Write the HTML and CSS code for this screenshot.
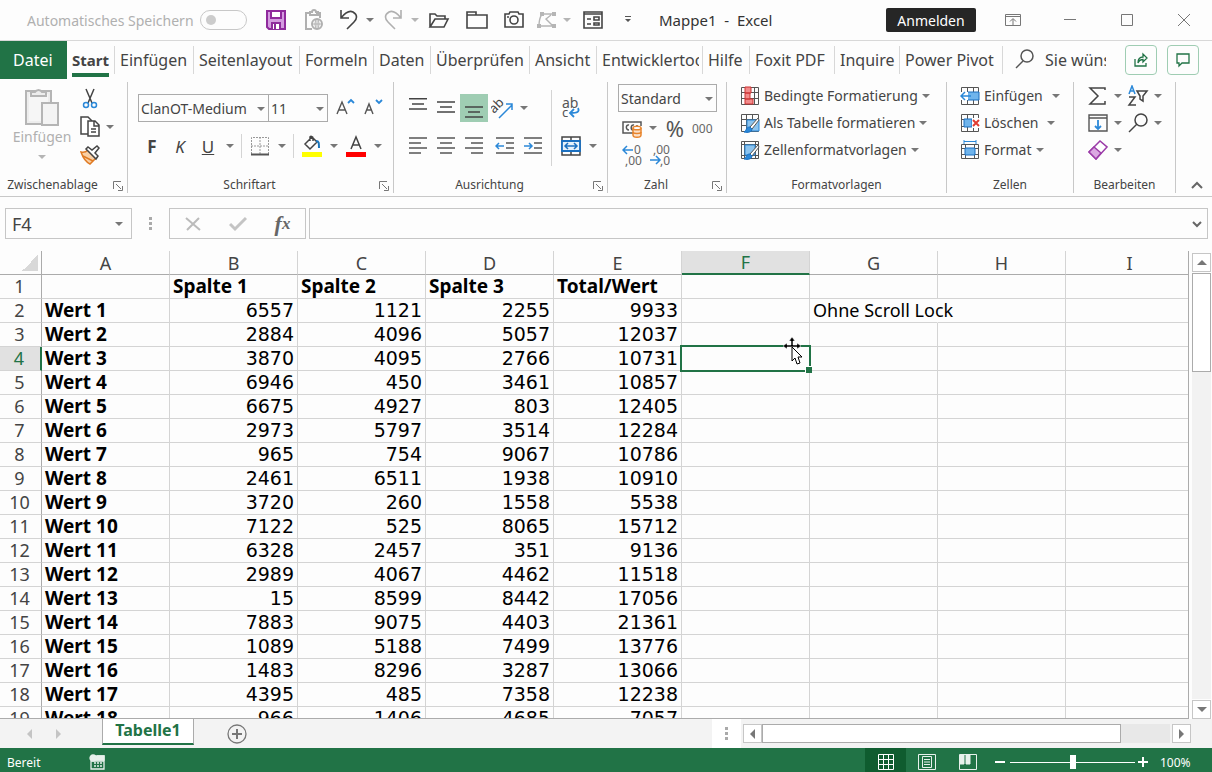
FILE: index.html
```html
<!DOCTYPE html>
<html lang="de">

<head>
    <meta charset="UTF-8">
    <meta name="viewport" content="width=device-width, initial-scale=1.0">
    <title>Mappe1 - Excel</title>
    <link rel="stylesheet" href="styles.css">
</head>

<body>
    <header class="titlebar">
        <label class="autosave" for="autosave">Automatisches Speichern</label>
        <input type="checkbox" id="autosave" class="toggle" disabled>
        <div class="quick">
            <button aria-label="Speichern"><svg width="22" height="22" viewBox="0 0 22 22" fill="none" stroke="#8f2a9c" stroke-width="2"><path d="M2 2h18v18H4l-2-2z" fill="#d49be0"/><path d="M6 2h10v7H6z" fill="#fff"/><path d="M7 20v-6h8v6" fill="#fff"/><path d="M10 15v5"/></svg></button>
            <button aria-label="Einfügen" disabled><svg width="20" height="22" viewBox="0 0 20 22" fill="none" stroke="#b0b0b0" stroke-width="2"><path d="M8 20H2V4h4M12 4h4v5M6 6V3h2a2 2 0 0 1 4 0h2v3z"/><circle cx="13" cy="15" r="5"/><path d="M13 10v10M8 15h10" stroke-width="1"/><ellipse cx="13" cy="15" rx="2" ry="5" stroke-width="1"/></svg></button>
            <button aria-label="Rückgängig"><svg width="20" height="22" viewBox="0 0 20 22" fill="none" stroke="#444" stroke-width="1.6"><path d="M2 1v8h8M2 9C6 4 10 1 14 3c5 3 4 7 1 10l-7 7"/></svg></button>
            <button aria-label="Liste" class="caret"></button>
            <button aria-label="Wiederholen" disabled><svg width="20" height="22" viewBox="0 0 20 22" fill="none" stroke="#b0b0b0" stroke-width="1.6"><path d="M18 1v8h-8M18 9C14 4 10 1 6 3c-5 3-4 7-1 10l7 7"/></svg></button>
            <button aria-label="Liste" class="caret" disabled></button>
            <button aria-label="Öffnen"><svg width="22" height="20" viewBox="0 0 22 20" fill="none" stroke="#444" stroke-width="1.6"><path d="M2 17V4h5l2 2h8v3M2 17l5-8h13l-4 8z"/></svg></button>
            <button aria-label="Neu"><svg width="22" height="20" viewBox="0 0 22 20" fill="none" stroke="#444" stroke-width="1.6"><path d="M1 2h9v3h11v13H1zM1 5h9"/></svg></button>
            <button aria-label="Kamera"><svg width="22" height="20" viewBox="0 0 22 20" fill="none" stroke="#444" stroke-width="1.6"><path d="M2 4h4l1-2h8l1 2h4v13H2z"/><circle cx="11" cy="10" r="4"/><path d="M4 7h2"/></svg></button>
            <button aria-label="Form" disabled><svg width="22" height="20" viewBox="0 0 22 20" fill="none" stroke="#b5b5b5" stroke-width="1.4"><path d="M6 4c-2 3-3 7-3 12h15M8 4h10M15 5l-5 4 6 6"/><path d="M4 2h4v4H4zM16 2h4v4h-4zM1 14h4v4H1zM16 14h4v4h-4z" fill="#b5b5b5" stroke="none"/></svg></button>
            <button aria-label="Liste" class="caret" disabled></button>
            <button aria-label="Formular"><svg width="22" height="20" viewBox="0 0 22 20" fill="none" stroke="#444" stroke-width="1.6"><path d="M2 2h18v16H2zM2 4h18"/><path d="M5 9h4M5 14h4M12 7h5v3h-5zM12 13h5v2h-5z"/></svg></button>
            <button aria-label="Anpassen"><svg width="8" height="8" viewBox="0 0 8 8" fill="#555"><path d="M1 0h6v1H1zM1 3h6L4 6z"/></svg></button>
        </div>
        <h1 class="doc-title">Mappe1&nbsp; -&nbsp; Excel</h1>
        <button class="signin">Anmelden</button>
        <div class="window-buttons">
            <button aria-label="Menüband"><svg width="16" height="14" viewBox="0 0 16 14" fill="none" stroke="#777"><path d="M.5 1.500h15v11H.5zM.5 3.500h15M8 12V6M5 8.500L8 5.500l3 3"/></svg></button>
            <button aria-label="Minimieren"><svg width="14" height="14" viewBox="0 0 14 14" stroke="#777"><path d="M1 6.500h12"/></svg></button>
            <button aria-label="Maximieren"><svg width="14" height="14" viewBox="0 0 14 14" fill="none" stroke="#777"><path d="M1.500 1.500h11v11h-11z"/></svg></button>
            <button aria-label="Schließen"><svg width="14" height="14" viewBox="0 0 14 14" stroke="#777"><path d="M1 1l12 12M13 1L1 13"/></svg></button>
        </div>
    </header>

    <nav class="tabs">
        <a href="#" class="file">Datei</a>
        <a href="#" class="active"><span>Start</span></a>
        <a href="#">Einfügen</a>
        <a href="#">Seitenlayout</a>
        <a href="#">Formeln</a>
        <a href="#">Daten</a>
        <a href="#">Überprüfen</a>
        <a href="#">Ansicht</a>
        <a href="#"><span class="clip">Entwicklertools</span></a>
        <a href="#">Hilfe</a>
        <a href="#">Foxit PDF</a>
        <a href="#">Inquire</a>
        <a href="#">Power Pivot</a>
        <div class="tell-me">
            <svg width="20" height="20" viewBox="0 0 20 20" fill="none" stroke="#555" stroke-width="1.500"><circle cx="12" cy="7" r="6"/><path d="M8 12l-7 7"/></svg>
            <a href="#" class="clip">Sie wünschen</a>
        </div>
        <div class="share">
            <button aria-label="Freigeben"><svg width="16" height="16" viewBox="0 0 16 16" fill="none" stroke="#217346" stroke-width="1.300"><path d="M2 7v7h11v-3M5 11c0-4 2-6 5-6V2l4 4-4 4V7.500C8 7.500 6 8.500 5 11z"/></svg></button>
            <button aria-label="Kommentare"><svg width="16" height="16" viewBox="0 0 16 16" fill="none" stroke="#217346" stroke-width="1.300"><path d="M2 2h12v9H7l-3 3v-3H2z"/></svg></button>
        </div>
    </nav>

    <section class="ribbon">
        <div class="group clipboard">
            <div class="group-body">
                <button class="paste" disabled>
                    <svg width="36" height="40" viewBox="0 0 36 40" fill="#ededed" stroke="#b5b5b5" stroke-width="2"><path d="M2 5h25v33H2z"/><path d="M5 8h19v27H5z" fill="#f6f6f6" stroke="none"/><path d="M7 10V6h4a4 4 0 0 1 7 0h4v4z"/><path d="M18 17h16v22H18z" fill="#f4f4f4"/></svg>
                    <span>Einfügen</span>
                    <i class="arrow"></i>
                </button>
                <div class="stack">
                    <div class="row"><button aria-label="Ausschneiden"><svg width="20" height="22" viewBox="0 0 20 22" fill="none" stroke="#444" stroke-width="1.500"><path d="M6 1l6 14M14 1L8 15"/><g stroke="#2b88d8"><circle cx="6" cy="17" r="2.500"/><circle cx="14" cy="17" r="2.500"/></g></svg></button></div>
                    <div class="row"><button aria-label="Kopieren"><svg width="20" height="22" viewBox="0 0 20 22" fill="#fff" stroke="#444" stroke-width="1.500"><path d="M8 18H1V1h7l4 4"/><path d="M8 5h7l4 4v11H8zM14 5v5h5M11 13h5M11 16h5"/></svg></button><button aria-label="Liste" class="caret"></button></div>
                    <div class="row"><button aria-label="Format übertragen"><svg width="20" height="22" viewBox="0 0 20 22" fill="#fff" stroke="#444" stroke-width="1.500"><path d="M1 8c3 1 5 0 7-2l8 8-6 6C6 18 3 14 1 8z" fill="#f9cfa4" stroke="#e07b24"/><path d="M3 12l10 5" stroke="#e07b24"/><path d="M6 5l10 10 2-3-3-3 4-5-2-2-5 4-4-3z"/></svg></button></div>
                </div>
            </div>
            <div class="group-name">Zwischenablage<button aria-label="Mehr" class="launch"><svg width="10" height="10" viewBox="0 0 10 10" fill="none" stroke="#777"><path d="M.5 8V.5H8M3 3l5 5M9.500 5v4.500H5"/></svg></button></div>
        </div>

        <div class="group font">
            <div class="group-body rows">
                <div class="row">
                    <span class="combo font-name"><select aria-label="Schriftart"><option>ClanOT-Medium</option></select></span>
                    <span class="combo font-size"><select aria-label="Schriftgrad"><option>11</option></select></span>
                    <button aria-label="Größer"><svg width="20" height="20" viewBox="0 0 20 20" fill="none" stroke="#555" stroke-width="1.400"><path d="M2 16L7 4l5 12M4 12h6"/><path d="M13 5l3-3 3 3" stroke="#2b88d8" stroke-width="1.800"/></svg></button>
                    <button aria-label="Kleiner"><svg width="20" height="20" viewBox="0 0 20 20" fill="none" stroke="#555" stroke-width="1.400"><path d="M2 16L6 6l4 10M4 12h5"/><path d="M13 2l3 3 3-3" stroke="#2b88d8" stroke-width="1.800"/></svg></button>
                </div>
                <div class="row">
                    <button class="bold">F</button>
                    <button class="italic">K</button>
                    <button class="underline">U</button>
                    <button aria-label="Liste" class="caret"></button>
                    <i class="divider"></i>
                    <button aria-label="Rahmen"><svg width="20" height="20" viewBox="0 0 20 20" fill="none" stroke="#999"><path d="M1.500 18V1.500h17V18M10 1v17M1 10h18" stroke-dasharray="2 1"/><path d="M1 18.500h18" stroke="#555" stroke-width="2"/></svg></button>
                    <button aria-label="Liste" class="caret"></button>
                    <i class="divider"></i>
                    <button aria-label="Füllfarbe"><svg width="20" height="22" viewBox="0 0 20 22" fill="none" stroke="#444" stroke-width="1.500"><path d="M3 9l7-7 5 5-7 7zM8 6V2c0-1 3-1 3 1v3"/><path d="M14 6c3 0 3 2 3 7" stroke="#1a75bc" stroke-width="2"/><path d="M0 17h20v5H0z" fill="#ff0" stroke="none"/></svg></button>
                    <button aria-label="Liste" class="caret"></button>
                    <button aria-label="Schriftfarbe"><svg width="20" height="22" viewBox="0 0 20 22" fill="none" stroke="#444" stroke-width="1.500"><path d="M5 14l5-12 5 12M7 10h6"/><path d="M0 17h20v5H0z" fill="#f00" stroke="none"/></svg></button>
                    <button aria-label="Liste" class="caret"></button>
                </div>
            </div>
            <div class="group-name">Schriftart<button aria-label="Mehr" class="launch"><svg width="10" height="10" viewBox="0 0 10 10" fill="none" stroke="#777"><path d="M.5 8V.5H8M3 3l5 5M9.500 5v4.500H5"/></svg></button></div>
        </div>

        <div class="group align">
            <div class="group-body">
                <div class="rows">
                    <div class="row">
                        <button aria-label="Oben"><svg width="20" height="20" viewBox="0 0 20 20" stroke="#444" stroke-width="1.500"><path d="M1 0.800h18M4 6h12M1 11h18"/></svg></button>
                        <button aria-label="Mitte"><svg width="20" height="20" viewBox="0 0 20 20" stroke="#444" stroke-width="1.500"><path d="M1 4h18M4 9h12M1 14h18"/></svg></button>
                        <button aria-label="Unten" class="on"><svg width="20" height="20" viewBox="0 0 20 20" stroke="#444" stroke-width="1.500"><path d="M1 9h18M4 14h12M1 19h18"/></svg></button>
                        <button aria-label="Ausrichtung"><svg width="22" height="22" viewBox="0 0 22 22" fill="none"><text x="0" y="14" transform="rotate(-45 5 12)" font-size="13" fill="#444">ab</text><path d="M8 21L21 8M15 7h6v6" stroke="#2b88d8" stroke-width="1.500"/></svg></button>
                        <button aria-label="Liste" class="caret"></button>
                    </div>
                    <div class="row">
                        <button aria-label="Linksbündig"><svg width="20" height="20" viewBox="0 0 20 20" stroke="#555" stroke-width="1.500"><path d="M1 2h18M1 7h12M1 12h18M1 17h12"/></svg></button>
                        <button aria-label="Zentriert"><svg width="20" height="20" viewBox="0 0 20 20" stroke="#555" stroke-width="1.500"><path d="M1 2h18M4 7h12M1 12h18M4 17h12"/></svg></button>
                        <button aria-label="Rechtsbündig"><svg width="20" height="20" viewBox="0 0 20 20" stroke="#555" stroke-width="1.500"><path d="M1 2h18M7 7h12M1 12h18M7 17h12"/></svg></button>
                        <button aria-label="Einzug verkleinern" class="indent"><svg width="20" height="20" viewBox="0 0 20 20" fill="none" stroke="#555" stroke-width="1.500"><path d="M1 2h18M11 7h8M11 12h8M1 17h18"/><path d="M9 10H1M4 7l-3 3 3 3" stroke="#2b88d8"/></svg></button>
                        <button aria-label="Einzug vergrößern"><svg width="20" height="20" viewBox="0 0 20 20" fill="none" stroke="#555" stroke-width="1.500"><path d="M1 2h18M11 7h8M11 12h8M1 17h18"/><path d="M1 10h8M6 7l3 3-3 3" stroke="#2b88d8"/></svg></button>
                    </div>
                </div>
                <i class="divider tall"></i>
                <div class="rows">
                    <div class="row"><button aria-label="Textumbruch"><svg width="20" height="22" viewBox="0 0 20 22" fill="none"><text x="1" y="11" font-size="14" fill="#555">ab</text><text x="1" y="20" font-size="13" fill="#555">c</text><path d="M17 11c2 4-1 5-7 5M13 12l-4 4 4 4" stroke="#2b88d8" stroke-width="1.800"/></svg></button></div>
                    <div class="row"><button aria-label="Verbinden"><svg width="20" height="20" viewBox="0 0 20 20" fill="none" stroke="#444" stroke-width="1.500"><path d="M1 1h18v18H1zM10 1v4M10 15v4"/><path d="M1 5h18v10H1z" fill="#e6f1fa" stroke="#1a6fc0" stroke-width="1.800"/><path d="M4 10h12M7 7l-3 3 3 3M13 7l3 3-3 3" stroke="#1a6fc0"/></svg></button><button aria-label="Liste" class="caret"></button></div>
                </div>
            </div>
            <div class="group-name">Ausrichtung<button aria-label="Mehr" class="launch"><svg width="10" height="10" viewBox="0 0 10 10" fill="none" stroke="#777"><path d="M.5 8V.5H8M3 3l5 5M9.500 5v4.500H5"/></svg></button></div>
        </div>

        <div class="group number">
            <div class="group-body stack">
                <span class="combo"><select aria-label="Zahlenformat"><option>Standard</option></select></span>
                <div class="row">
                    <button aria-label="Währung"><svg width="22" height="20" viewBox="0 0 22 20" fill="none" stroke="#555" stroke-width="1.500"><path d="M12 15H2V4h18v4"/><path d="M8 7c-3-1-4 5 0 5M13 7c-3-1-4 5-1 5M16 7v2"/><path d="M12 10v7c0 3 8 3 8 0v-7" fill="#fbe0c8" stroke="#e8842c"/><path d="M12 14c0 2 8 2 8 0" stroke="#e8842c"/><ellipse cx="16" cy="10" rx="4" ry="1.800" fill="#fff" stroke="#e8842c"/></svg></button>
                    <button aria-label="Liste" class="caret"></button>
                    <button class="percent">%</button>
                    <button class="thousand">000</button>
                </div>
                <div class="row">
                    <button aria-label="Dezimalstelle hinzufügen"><svg width="20" height="22" viewBox="0 0 20 22" fill="none"><text x="12" y="9" font-size="12" fill="#666">0</text><text x="3" y="20" font-size="12" fill="#666">,00</text><path d="M11 5H1M5 1L1 5l4 4" stroke="#2b88d8" stroke-width="1.500"/></svg></button>
                    <button aria-label="Dezimalstelle löschen"><svg width="20" height="22" viewBox="0 0 20 22" fill="none"><text x="3" y="9" font-size="12" fill="#666">,00</text><text x="10" y="20" font-size="12" fill="#666">,0</text><path d="M0 15h10M6 11l4 4-4 4" stroke="#2b88d8" stroke-width="1.500"/></svg></button>
                </div>
            </div>
            <div class="group-name">Zahl<button aria-label="Mehr" class="launch"><svg width="10" height="10" viewBox="0 0 10 10" fill="none" stroke="#777"><path d="M.5 8V.5H8M3 3l5 5M9.500 5v4.500H5"/></svg></button></div>
        </div>

        <div class="group styles">
            <div class="group-body list">
                <button><svg width="20" height="20" viewBox="0 0 20 20" fill="none" stroke="#555"><path d="M1.500 1.500h17v17h-17zM1 6.500h18M1 12.500h18M5.500 1v18M14.500 1v18"/><path d="M5 1h6v6H5zM5 13h8v5H5zM5 7h5v6H5z" fill="#f28b8b" stroke="#c33"/></svg>Bedingte Formatierung<i class="arrow"></i></button>
                <button><svg width="20" height="20" viewBox="0 0 20 20" fill="none" stroke="#555"><path d="M1.500 1.500h17v17h-17zM1 6.500h18M1 12.500h18M6.500 1v18M12.500 1v18"/><path d="M7 7h12v11H7z" fill="#8cc4ef" stroke="#2b88d8"/><path d="M18 5l-8 9 2 2 7-9z" fill="#fff"/><path d="M10 14c-4 0-3 3-6 5 4 1 8 0 8-3z" fill="#2b88d8" stroke="#1a6fc0"/></svg>Als Tabelle formatieren<i class="arrow"></i></button>
                <button><svg width="20" height="20" viewBox="0 0 20 20" fill="none" stroke="#555"><path d="M1.500 1.500h17v17h-17zM1 4.500h18M4.500 1v18M15.500 1v18M1 15.500h18"/><path d="M5 5h10v10H5z" fill="#8cc4ef" stroke="#2b88d8"/><path d="M18 5l-8 9 2 2 7-9z" fill="#fff"/><path d="M10 14c-4 0-3 3-6 5 4 1 8 0 8-3z" fill="#2b88d8" stroke="#1a6fc0"/></svg>Zellenformatvorlagen<i class="arrow"></i></button>
            </div>
            <div class="group-name">Formatvorlagen</div>
        </div>

        <div class="group cells">
            <div class="group-body list">
                <button class="spread"><svg width="20" height="20" viewBox="0 0 20 20" fill="none" stroke="#555"><path d="M1.500 1.500h17v17h-17zM1 6.500h18M1 13.500h18M7.500 1v18M13.500 1v18"/><path d="M7 6h12v8H7z" fill="#6fb4ec" stroke="#1a6fc0"/><path d="M0 6h8v8H0z" fill="#fff" stroke="none"/><path d="M11 10H1M5 6l-4 4 4 4" stroke="#2b88d8" stroke-width="1.500"/></svg>Einfügen<i class="arrow"></i></button>
                <button class="spread"><svg width="20" height="20" viewBox="0 0 20 20" fill="none" stroke="#555"><path d="M1.500 1.500h17v17h-17zM1 6.500h18M1 13.500h18M7.500 1v18M13.500 1v18"/><path d="M4 6h8v8H4z" fill="#6fb4ec" stroke="#1a6fc0"/><path d="M12 5h8v10h-8z" fill="#fff" stroke="none"/><path d="M13 7l6 6M19 7l-6 6" stroke="#e03c31" stroke-width="2"/></svg>Löschen<i class="arrow"></i></button>
                <button><svg width="20" height="20" viewBox="0 0 20 20" fill="none" stroke="#555"><path d="M1.500 4.500h17v14h-17zM1 8.500h18M1 14.500h18M5.500 4v15M14.500 4v15"/><path d="M5 8h10v7H5z" fill="#6fb4ec" stroke="#1a6fc0"/><path d="M4 1.500h12M4 0v4M16 0v4" stroke="#2b88d8"/></svg>Format<i class="arrow"></i></button>
            </div>
            <div class="group-name">Zellen</div>
        </div>

        <div class="group edit">
            <div class="group-body list">
                <div class="row">
                    <button aria-label="Summe"><svg width="20" height="20" viewBox="0 0 20 20" fill="none" stroke="#444" stroke-width="1.500"><path d="M17 4V2H2l8 8-8 8h15v-3"/></svg></button><button aria-label="Liste" class="caret"></button>
                    <button aria-label="Sortieren"><svg width="22" height="22" viewBox="0 0 22 22" fill="none" stroke-width="1.500"><path d="M2 9l3-8 3 8M3 6h4" stroke="#2b88d8"/><path d="M2 12h6l-6 8h7M10 6h10l-4 5v5l-3-2v-3z" stroke="#444"/></svg></button><button aria-label="Liste" class="caret"></button>
                </div>
                <div class="row">
                    <button aria-label="Füllbereich"><svg width="20" height="20" viewBox="0 0 20 20" fill="none" stroke="#555" stroke-width="1.400"><path d="M1 2h18v16H1zM1 5h18"/><path d="M10 7v9M7 13l3 3 3-3" stroke="#2b88d8" stroke-width="1.800"/></svg></button><button aria-label="Liste" class="caret"></button>
                    <button aria-label="Suchen"><svg width="22" height="20" viewBox="0 0 22 20" fill="none" stroke="#444" stroke-width="1.500"><circle cx="14" cy="7" r="6"/><path d="M10 11l-8 8"/></svg></button><button aria-label="Liste" class="caret"></button>
                </div>
                <div class="row">
                    <button aria-label="Löschen"><svg width="20" height="20" viewBox="0 0 20 20" fill="#fff" stroke="#9b3ba8" stroke-width="1.500"><path d="M1 12L12 1l7 6L8 19z"/><path d="M1 12l5-5 7 6-5 6z" fill="#dba8e2"/></svg></button><button aria-label="Liste" class="caret"></button>
                </div>
            </div>
            <div class="group-name">Bearbeiten</div>
        </div>
        <button class="collapse" aria-label="Menüband reduzieren"><svg width="12" height="8" viewBox="0 0 12 8" fill="none" stroke="#666" stroke-width="2"><path d="M1 7l5-5 5 5"/></svg></button>
    </section>

    <div class="formula-bar">
        <span class="combo name-box"><select aria-label="Namenfeld"><option>F4</option></select></span>
        <i class="grip"></i>
        <div class="fx">
            <button aria-label="Abbrechen" disabled><svg width="16" height="16" viewBox="0 0 16 16" stroke="#bbb" stroke-width="2"><path d="M1 2l14 12M14 2L2 14"/></svg></button>
            <button aria-label="Eingeben" disabled><svg width="18" height="16" viewBox="0 0 18 16" fill="none" stroke="#c4c4c4" stroke-width="3"><path d="M1 8l5 5L17 2"/></svg></button>
            <button class="fx-label">f<small>x</small></button>
        </div>
        <div class="formula">
            <input type="text" aria-label="Formel">
            <button aria-label="Erweitern"><svg width="10" height="8" viewBox="0 0 10 8" fill="none" stroke="#666" stroke-width="2"><path d="M1 2l4 4 4-4"/></svg></button>
        </div>
    </div>

    <main class="sheet">
        <div class="cells-view">
            <table>
                <colgroup><col class="col-head"><col span="9" class="col"></colgroup>
                <thead>
                    <tr><th class="corner"></th><th>A</th><th>B</th><th>C</th><th>D</th><th>E</th><th class="selected">F</th><th>G</th><th>H</th><th>I</th></tr>
                </thead>
                <tbody id="rows"></tbody>
            </table>
        </div>
        <div class="scroll-v">
            <button aria-label="Nach oben"><i class="tri up"></i></button>
            <div class="track"><div class="thumb"></div></div>
            <button aria-label="Nach unten"><i class="tri down"></i></button>
        </div>
    </main>

    <div class="sheet-tabs">
        <button aria-label="Vorheriges" class="step"><i class="tri left"></i></button>
        <button aria-label="Nächstes" class="step"><i class="tri right"></i></button>
        <a href="#" class="sheet-tab">Tabelle1</a>
        <button class="add" aria-label="Neues Blatt"><svg width="20" height="20" viewBox="0 0 20 20" fill="none" stroke="#777" stroke-width="1.300"><circle cx="10" cy="10" r="9"/><path d="M5 10h10M10 5v10" stroke-width="2"/></svg></button>
        <span class="grip-box"><i class="grip"></i></span>
        <div class="scroll-h">
            <button aria-label="Nach links"><i class="tri left"></i></button>
            <div class="track"><div class="thumb"></div></div>
            <button aria-label="Nach rechts"><i class="tri right"></i></button>
        </div>
    </div>

    <footer class="status">
        <span>Bereit</span>
        <button class="macro" aria-label="Makro"><svg width="16" height="16" viewBox="0 0 16 16" fill="none" stroke="#e8f1ec" stroke-width="1.300"><path d="M2 6v9h13V2H8M2 7h13M5 9h2M8 9h2M11 9h2M5 12h2M8 12h2M11 12h2"/><path d="M7 2h8v4H7z" fill="#e8f1ec"/><circle cx="4" cy="4" r="3" fill="#e8f1ec"/></svg></button>
        <div class="views">
            <button aria-label="Normal" class="current"><svg width="16" height="16" viewBox="0 0 16 16" fill="none" stroke="#fff"><path d="M.5.5h15v15H.5zM.5 5.500h15M.5 10.500h15M5.500.5v15M10.500.5v15"/></svg></button>
            <button aria-label="Seitenlayout"><svg width="18" height="16" viewBox="0 0 18 16" fill="none" stroke="#e8f1ec"><path d="M.5.5h17v15H.5zM4.500 2.500h9v11h-9zM6 5.500h6M6 8h6M6 10.500h6"/></svg></button>
            <button aria-label="Umbruchvorschau"><svg width="18" height="16" viewBox="0 0 18 16" fill="none" stroke="#e8f1ec"><path d="M.5.5h17v15H.5z"/><path d="M1 1h4v9H1zM7 1h4v9H7z" fill="#e8f1ec"/></svg></button>
        </div>
        <button class="zoom-step" aria-label="Verkleinern"><svg width="10" height="10" viewBox="0 0 10 10" stroke="#fff" stroke-width="2"><path d="M0 5h10"/></svg></button>
        <input type="range" class="zoom" aria-label="Zoom" min="0" max="100" value="50">
        <button class="zoom-step" aria-label="Vergrößern"><svg width="10" height="10" viewBox="0 0 10 10" stroke="#fff" stroke-width="2"><path d="M0 5h10M5 0v10"/></svg></button>
        <span class="percent-value">100%</span>
    </footer>

    <script src="script.js"></script>
</body>

</html>
```
FILE: styles.css
```css
* {
    box-sizing: border-box;
}

body {
    display: flex;
    flex-direction: column;
    height: 100vh;
    margin: 0;
    overflow: hidden;
    background-color: #fdfdfd;
    color: #444;
    font-family: "Noto Sans", "Open Sans", sans-serif;
    font-size: 14px;
}

button,
select,
input {
    margin: 0;
    padding: 0;
    border: 0;
    background: none;
    color: inherit;
    font-family: inherit;
    font-size: inherit;
}

button {
    display: flex;
    align-items: center;
    justify-content: center;
}

svg {
    display: block;
    flex: none;
}

a {
    color: inherit;
    text-decoration: none;
}

/* small drop-down arrow */
.arrow,
.caret::before,
.combo::after {
    content: "";
    flex: none;
    border: 4px solid transparent;
    border-top-color: #777;
    border-bottom: 0;
}

.caret:disabled::before,
.paste .arrow {
    border-top-color: #b5b5b5;
}

/* title bar */
.titlebar {
    display: flex;
    flex: none;
    align-items: center;
    height: 41px;
    padding-left: 27px;
    border-bottom: 1px solid #d8d8d8;
}

.autosave {
    width: 173px;
    color: #b0b0b0;
    white-space: nowrap;
}

.toggle {
    display: flex;
    align-items: center;
    width: 47px;
    height: 20px;
    padding-left: 5px;
    border: 1px solid #c8c8c8;
    border-radius: 10px;
    appearance: none;
}

.toggle::before {
    content: "";
    width: 10px;
    height: 10px;
    border-radius: 50%;
    background-color: #ccc;
}

.quick {
    display: grid;
    grid-template-columns: 38px 38px 32px 10px 36px 8px 40px 36px 38px 28px 12px 40px 30px;
    margin-left: 10px;
}

.quick button {
    height: 30px;
}

.doc-title {
    margin: 0 0 0 16px;
    color: #333;
    font-size: 15px;
    font-weight: normal;
}

.signin {
    width: 90px;
    height: 24px;
    margin-left: auto;
    border-radius: 2px;
    background-color: #262626;
    color: #fff;
}

.window-buttons {
    display: flex;
    margin-left: 8px;
}

.window-buttons button {
    width: 57px;
    height: 30px;
}

/* ribbon tabs */
.tabs {
    display: grid;
    flex: none;
    grid-template-columns: 67px 48px 79px 106px 74px 57px 99px 67px 106px 47px 85px 65px 103px 1fr auto;
    align-items: center;
    height: 38px;
    font-size: 16px;
    white-space: nowrap;
}

.tabs > a {
    height: 28px;
    padding-left: 5px;
    border-right: 1px solid #d8d8d8;
    line-height: 28px;
}

.tabs > .file {
    height: 38px;
    padding-left: 13px;
    border: 0;
    background-color: #217346;
    color: #fff;
    line-height: 38px;
}

.active span {
    display: inline-block;
    height: 31px;
    border-bottom: 4px solid #217346;
    font-size: 15px;
    font-weight: bold;
}

.clip {
    display: block;
    overflow: hidden;
    width: 97px;
}

.tell-me {
    display: flex;
    gap: 10px;
    padding-left: 12px;
}

.tell-me .clip {
    width: 61px;
    line-height: 22px;
}

.share {
    display: flex;
    gap: 10px;
    padding-right: 13px;
}

.share button {
    width: 32px;
    height: 30px;
    border: 1px solid #9fcdb3;
    border-radius: 4px;
}

/* ribbon */
.ribbon {
    display: flex;
    flex: none;
    align-items: stretch;
    height: 118px;
    padding: 3px 0;
    border-bottom: 1px solid #c8c8c8;
}

.group {
    display: flex;
    flex: none;
    flex-direction: column;
    border-right: 1px solid #c8c8c8;
}

.group-body {
    display: flex;
    height: 96px;
}

.group-name {
    position: relative;
    font-size: 12px;
    line-height: 16px;
    text-align: center;
}

.group-name:has(.launch) {
    padding-right: 22px;
}

.launch {
    position: absolute;
    right: 4px;
    bottom: 2px;
}

.clipboard {
    width: 128px;
}

.font {
    width: 266px;
}

.align {
    width: 214px;
}

.number {
    width: 119px;
}

.styles {
    width: 220px;
}

.cells {
    width: 127px;
}

.edit {
    width: 102px;
}

.row {
    display: flex;
    align-items: center;
    height: 28px;
}

.row button {
    width: 28px;
    height: 28px;
}

.row .caret {
    width: 16px;
}

.rows {
    display: flex;
    flex-direction: column;
    gap: 10px;
}

.stack {
    display: flex;
    flex-direction: column;
}

.divider {
    width: 1px;
    height: 24px;
    margin: 0 4px 0 3px;
    background-color: #d4d4d4;
}

.divider.tall {
    height: 76px;
    margin: 0 5px 0 4px;
}

.paste {
    flex-direction: column;
    justify-content: flex-start;
    width: 74px;
    height: 80px;
    padding: 4px 0 0 10px;
    color: #b0b0b0;
}

.paste span {
    margin-bottom: 7px;
    line-height: 22px;
}

.clipboard .stack {
    padding: 3px 0 0 2px;
}

.clipboard .row .caret {
    width: 12px;
}

.combo {
    display: flex;
    position: relative;
    height: 28px;
    border: 1px solid #ababab;
}

.combo::after {
    position: absolute;
    top: 12px;
    right: 3px;
}

.combo select {
    width: 100%;
    padding-left: 2px;
    appearance: none;
}

.font .group-body {
    padding: 12px 0 0 10px;
}

.font-name {
    width: 131px;
}

.font-size {
    width: 60px;
    margin-left: -1px;
    margin-right: 3px;
}

.bold {
    font-size: 17px;
    font-weight: bold;
}

.italic {
    font-size: 17px;
    font-style: italic;
}

.underline {
    font-size: 17px;
    text-decoration: underline;
}

.align .group-body {
    padding: 12px 0 0 10px;
}

.align .divider {
    margin-top: -4px;
}

.row .indent {
    margin-left: 3px;
}

.on {
    background-color: #9fcdb3;
}

.number .group-body {
    padding: 2px 10px;
}

.number .combo {
    width: 99px;
    margin-bottom: 2px;
}

.number .percent {
    color: #555;
    font-size: 22px;
}

.number .thousand {
    color: #666;
    font-size: 12px;
}

.list {
    display: flex;
    flex-direction: column;
    align-items: flex-start;
    padding: 0 0 0 13px;
}

.list > button {
    gap: 4px;
    height: 27px;
    white-space: nowrap;
}

.spread .arrow {
    margin-left: 5px;
}

.edit .list {
    padding-left: 10px;
}

.list .row {
    height: 27px;
}

.list .row .caret {
    width: 12px;
}

.collapse {
    align-self: flex-end;
    width: 20px;
    height: 16px;
    margin: 0 5px 0 auto;
}

/* formula bar */
.formula-bar {
    display: flex;
    flex: none;
    height: 54px;
    padding: 11px 4px 12px 5px;
}

.formula-bar > .combo,
.fx,
.formula {
    height: 31px;
    border: 1px solid #c6c6c6;
}

.name-box {
    width: 127px;
    font-size: 18px;
}

.name-box select {
    padding-left: 6px;
}

.name-box::after {
    top: 13px;
    right: 8px;
}

/* three dots */
.grip {
    width: 3px;
    height: 13px;
    margin: auto;
    background: repeating-linear-gradient(#aaa 0 3px, transparent 3px 5px);
}

.formula-bar .grip {
    margin: 9px 17px;
}

.fx {
    display: grid;
    grid-template-columns: repeat(3, 45px);
    width: 137px;
    margin-right: 3px;
}

.fx-label {
    color: #666;
    font-family: "Liberation Serif", serif;
    font-size: 22px;
    font-style: italic;
    font-weight: bold;
}

.fx-label small {
    font-size: 17px;
}

.formula {
    display: flex;
    flex: 1;
}

.formula input {
    flex: 1;
    min-width: 0;
}

.formula button {
    width: 20px;
}

/* worksheet */
.sheet {
    display: flex;
    flex: 1;
    min-height: 0;
}

.cells-view {
    flex: 1;
    overflow: hidden;
    border-right: 1px solid #ababab;
    border-bottom: 1px solid #ababab;
}

table {
    table-layout: fixed;
    width: 1194px;
    border-collapse: separate;
    border-spacing: 0;
}

.col-head {
    width: 42px;
}

.col {
    width: 128px;
}

th,
td {
    height: 24px;
    padding: 0 3px;
    border-right: 1px solid #d4d4d4;
    border-bottom: 1px solid #d4d4d4;
    font-size: 18px;
    line-height: 23px;
    white-space: nowrap;
}

th {
    padding: 0;
    font-weight: normal;
}

thead th {
    border-bottom-color: #ababab;
    line-height: 22px;
}

tbody th {
    padding-right: 2px;
    border-right-color: #ababab;
}

.corner {
    border-color: #ababab;
    background: linear-gradient(135deg, transparent 50%, #d8d8d8 50%) 22px 4px / 16px 16px no-repeat;
}

th.selected {
    background-color: #e1e1e1;
    color: #217346;
}

thead .selected {
    border-bottom: 2px solid #217346;
}

tbody .selected {
    border-right: 2px solid #217346;
}

td {
    color: #000;
}

.head {
    font-size: 19px;
    font-weight: bold;
}

.num {
    font-family: "DejaVu Sans", sans-serif;
    font-size: 19px;
    text-align: right;
}

.spill {
    border-right-color: transparent;
}

.cell-active {
    position: relative;
}

/* frame and fill handle of the active cell */
.frame {
    position: absolute;
    inset: -2px;
    border: 2px solid #217346;
}

.frame::after {
    content: "";
    position: absolute;
    right: -3px;
    bottom: -3px;
    width: 6px;
    height: 6px;
    border: solid #fff;
    border-width: 1px 0 0 1px;
    background-color: #217346;
}

.pointer {
    position: absolute;
    z-index: 1;
    top: -10px;
    right: 5px;
}

/* scroll bars */
.scroll-v {
    display: flex;
    flex-direction: column;
    gap: 1px;
    width: 19px;
    margin: 2px 1px 0 3px;
}

.scroll-v button,
.scroll-h button {
    flex: none;
    width: 19px;
    height: 19px;
    border: 1px solid #c6c6c6;
    background-color: #fff;
}

.track {
    flex: 1;
    background-color: #f2f2f2;
}

.thumb {
    border: 1px solid #ababab;
    background-color: #fff;
}

.scroll-v .thumb {
    height: 99px;
}

.scroll-h .thumb {
    width: 88%;
    height: 19px;
}

.tri {
    border: 5px solid transparent;
}

.up {
    border-top: 0;
    border-bottom-color: #777;
}

.down {
    border-bottom: 0;
    border-top-color: #777;
}

.left {
    border-left: 0;
    border-right-color: #777;
}

.right {
    border-right: 0;
    border-left-color: #777;
}

/* sheet tabs */
.sheet-tabs {
    display: flex;
    flex: none;
    align-items: center;
    height: 29px;
    background-color: #f3f3f3;
}

.step {
    width: 29px;
    height: 20px;
}

.step:first-child {
    margin-left: 15px;
}

.step .left {
    border-right-color: #c4c4c4;
}

.step .right {
    border-left-color: #c4c4c4;
}

.sheet-tab {
    align-self: flex-start;
    width: 92px;
    height: 26px;
    margin-left: 29px;
    margin-right: 33px;
    border: solid #ababab;
    border-width: 0 1px;
    border-bottom: 2px solid #217346;
    background-color: #fff;
    color: #217346;
    font-size: 16px;
    font-weight: bold;
    line-height: 22px;
    text-align: center;
}

.grip-box {
    display: flex;
    width: 29px;
    height: 29px;
    margin-left: auto;
    background-color: #fff;
}

.scroll-h {
    display: flex;
    flex: 0 0 448px;
    margin: 0 21px 0 2px;
}

.scroll-h .track {
    margin-right: 2px;
    background-color: #e8e8e8;
}

/* status bar */
.status {
    display: flex;
    flex: none;
    align-items: center;
    height: 24px;
    padding-left: 7px;
    background-color: #217346;
    color: #fff;
    font-size: 12px;
}

.status > * {
    margin-top: 4px;
}

.macro {
    margin-left: 49px;
}

.status > .views {
    display: flex;
    margin: 0 4px 0 auto;
}

.views button {
    width: 41px;
    height: 24px;
    padding-top: 4px;
}

.views .current {
    background-color: #0f5c2f;
}

.zoom-step {
    width: 16px;
    height: 20px;
}

.zoom {
    width: 125px;
    height: 20px;
    margin-left: 2px;
    appearance: none;
    background: linear-gradient(#fff, #fff) center / 100% 1px no-repeat;
}

.zoom::-webkit-slider-thumb {
    width: 6px;
    height: 14px;
    appearance: none;
    background-color: #fff;
}

.percent-value {
    width: 61px;
    padding-left: 9px;
}
```
FILE: script.js
```js
const data = [
    [6557, 1121, 2255, 9933],
    [2884, 4096, 5057, 12037],
    [3870, 4095, 2766, 10731],
    [6946, 450, 3461, 10857],
    [6675, 4927, 803, 12405],
    [2973, 5797, 3514, 12284],
    [965, 754, 9067, 10786],
    [2461, 6511, 1938, 10910],
    [3720, 260, 1558, 5538],
    [7122, 525, 8065, 15712],
    [6328, 2457, 351, 9136],
    [2989, 4067, 4462, 11518],
    [15, 8599, 8442, 17056],
    [7883, 9075, 4403, 21361],
    [1089, 5188, 7499, 13776],
    [1483, 8296, 3287, 13066],
    [4395, 485, 7358, 12238],
    [966, 1406, 4685, 7057]
];

const frame = '<i class="frame"></i>' +
    '<svg class="pointer" width="22" height="28" viewBox="0 0 22 28">' +
    '<path d="M10 0l3 4h-2v4h4V6l4 3-4 3v-2H5v2L1 9l4-3v2h4V4H7z" fill="#000" stroke="#fff" stroke-width=".5"/>' +
    '<path d="M10 10v14l3-3 2 6 3-1-2-6h4z" fill="#fff" stroke="#000"/></svg>';

function addRow(number, cells) {
    const row = document.createElement('tr');
    const selected = number === 4 ? ' class="selected"' : '';
    row.innerHTML = `<th${selected}>${number}</th>` + cells.join('');
    document.getElementById('rows').appendChild(row);
}

const titles = ['', 'Spalte 1', 'Spalte 2', 'Spalte 3', 'Total/Wert', '', '', '', ''];
addRow(1, titles.map(title => `<td class="head">${title}</td>`));

data.forEach((values, i) => {
    const number = i + 2;
    const cells = [`<td class="head">Wert ${i + 1}</td>`];
    values.forEach(value => cells.push(`<td class="num">${value}</td>`));
    cells.push(number === 4 ? `<td class="cell-active">${frame}</td>` : '<td></td>');
    cells.push(number === 2 ? '<td class="spill">Ohne Scroll Lock</td>' : '<td></td>');
    cells.push('<td></td>', '<td></td>');
    addRow(number, cells);
});
```
